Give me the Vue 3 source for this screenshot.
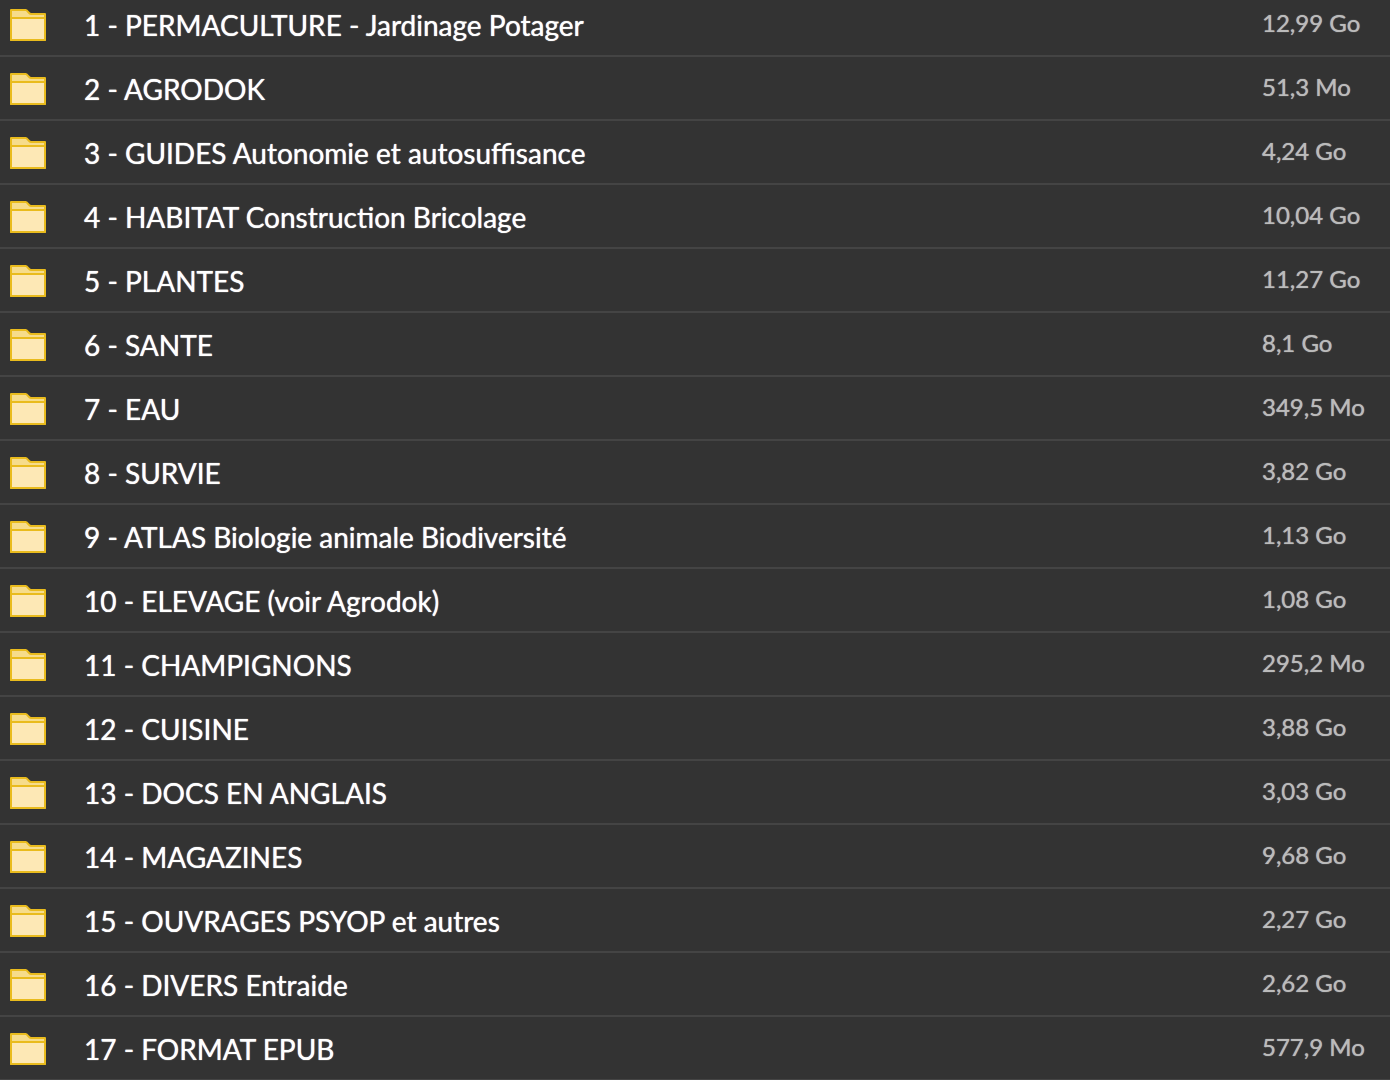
<script setup>
const folders = [
  { name: "1 - PERMACULTURE - Jardinage Potager", size: "12,99 Go" },
  { name: "2 - AGRODOK", size: "51,3 Mo" },
  { name: "3 - GUIDES Autonomie et autosuffisance", size: "4,24 Go" },
  { name: "4 - HABITAT Construction Bricolage", size: "10,04 Go" },
  { name: "5 - PLANTES", size: "11,27 Go" },
  { name: "6 - SANTE", size: "8,1 Go" },
  { name: "7 - EAU", size: "349,5 Mo" },
  { name: "8 - SURVIE", size: "3,82 Go" },
  { name: "9 - ATLAS Biologie animale Biodiversité", size: "1,13 Go" },
  { name: "10 - ELEVAGE (voir Agrodok)", size: "1,08 Go" },
  { name: "11 - CHAMPIGNONS", size: "295,2 Mo" },
  { name: "12 - CUISINE", size: "3,88 Go" },
  { name: "13 - DOCS EN ANGLAIS", size: "3,03 Go" },
  { name: "14 - MAGAZINES", size: "9,68 Go" },
  { name: "15 - OUVRAGES PSYOP et autres", size: "2,27 Go" },
  { name: "16 - DIVERS Entraide", size: "2,62 Go" },
  { name: "17 - FORMAT EPUB", size: "577,9 Mo" },
];
</script>

<template>
  <table class="files">
    <tbody>
      <tr v-for="folder in folders" :key="folder.name">
        <td class="icon">
          <svg width="36" height="32" viewBox="0 0 36 32" aria-hidden="true">
            <g stroke="#e9bb1d" stroke-width="2" stroke-linejoin="round">
              <path d="M1 31V1h14.6c2 0 3 4 5.4 4h14v26z" fill="#f6dc8b" />
              <path d="M1 9h34v22H1z" fill="#fde8b5" />
            </g>
          </svg>
        </td>
        <td class="name">{{ folder.name }}</td>
        <td class="size">{{ folder.size }}</td>
      </tr>
    </tbody>
  </table>
</template>

<style scoped>
/* the first row is partly scrolled out at the top */
.files {
  width: 100%;
  margin-top: -7px;
  table-layout: fixed;
  border-collapse: separate;
  border-spacing: 0;
  font-family: Lato, "Liberation Sans", sans-serif;
  text-shadow: 0 0 1px currentColor;
}

td {
  height: 64px;
  box-sizing: border-box;
  padding: 0;
  border-bottom: 2px solid #444;
  white-space: nowrap;
  vertical-align: top;
}

.icon {
  width: 84px;
  padding-top: 16px;
  padding-left: 10px;
}

.icon svg {
  display: block;
}

.name {
  padding-top: 15px;
  color: #fff;
  font-size: 28px;
  line-height: 34px;
}

.size {
  width: 128px;
  padding-top: 15px;
  color: #bbb;
  font-size: 24px;
  line-height: 30px;
}
</style>

<style>
body {
  margin: 0;
  background: #333;
}
</style>
